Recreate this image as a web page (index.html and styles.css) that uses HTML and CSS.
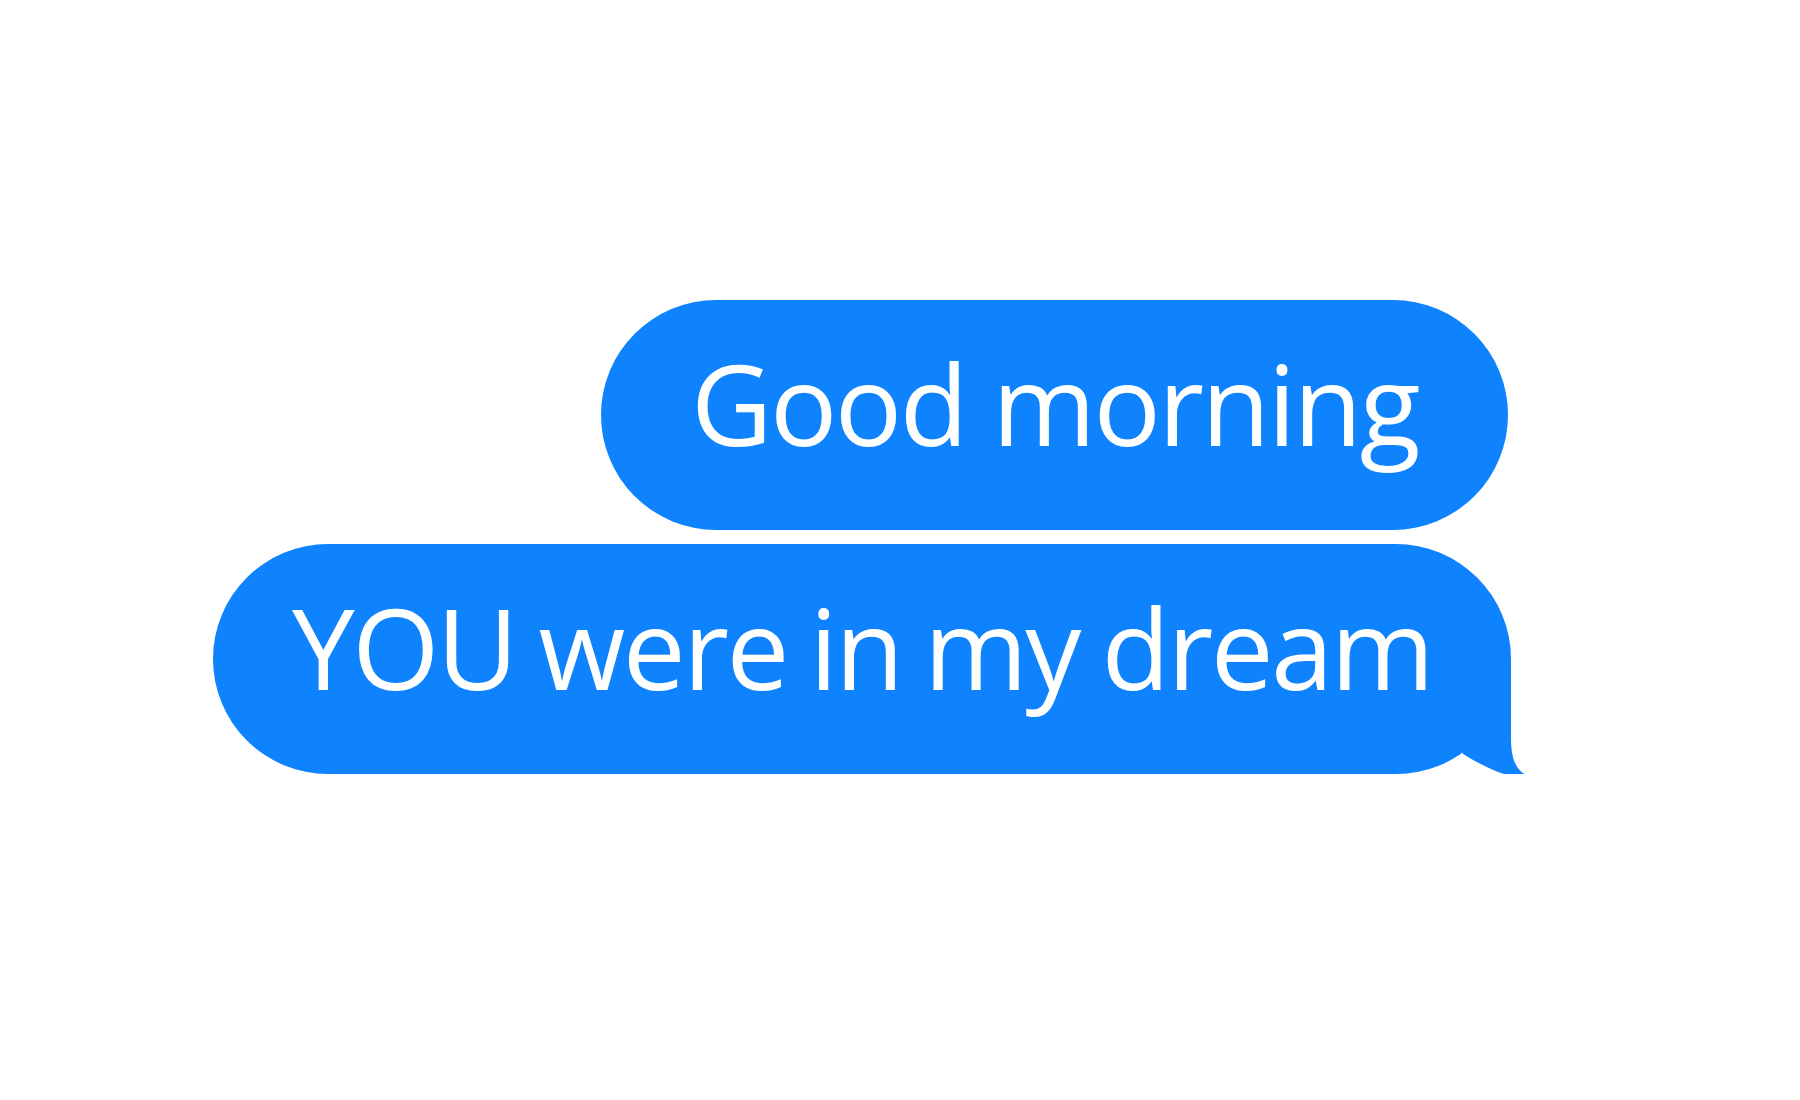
FILE: index.html
```html
<!DOCTYPE html>
<html>
<head>
<meta charset="utf-8">
<link rel="stylesheet" href="styles.css">
</head>
<body>
<div class="thread">
  <div class="bubble first"><span class="txt">Good morning</span></div>
  <div class="bubble second">
    <span class="txt">YOU were in my dream</span>
    <svg class="tail" width="82" height="130" viewBox="0 0 82 130">
      <path d="M59 0 L59 79 C59 100 64 113 78 117.5 C58 121 34 109 11 95 L0 60 L0 0 Z" fill="#0f82fe"/>
    </svg>
  </div>
</div>
</body>
</html>
```
FILE: styles.css
```css
html, body {
  margin: 0;
  padding: 0;
  background: #ffffff;
}
.thread {
  width: 1298px;
  margin-left: 213px;
  padding-top: 300px;
  display: flex;
  flex-direction: column;
  align-items: flex-end;
  gap: 14px;
}
.bubble {
  position: relative;
  box-sizing: border-box;
  height: 230px;
  padding-bottom: 25px;
  border-radius: 115px;
  background: #0f82fe;
  display: flex;
  align-items: center;
  justify-content: center;
  font-family: "Open Sans", "Noto Sans", sans-serif;
  color: #ffffff;
  font-size: 112px;
  line-height: 1;
}
.first {
  width: 907px;
  margin-right: 3px;
}
.second {
  width: 1298px;
}
.txt {
  white-space: nowrap;
  letter-spacing: -2.5px;
}
.second .txt {
  word-spacing: -4px;
}
.tail {
  position: absolute;
  left: 1239px;
  top: 115px;
}
```
